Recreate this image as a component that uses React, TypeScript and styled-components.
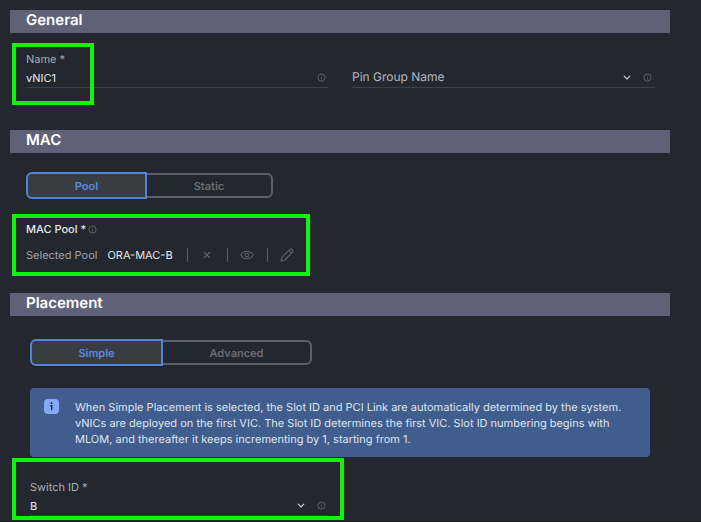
import React, { useState } from "react";
import styled, { createGlobalStyle } from "styled-components";

const GlobalStyle = createGlobalStyle`
  *, *::before, *::after { box-sizing: border-box; }
  body {
    margin: 0;
    background: #23272f;
    color: #e6e8eb;
    font-family: Inter, "Liberation Sans", sans-serif;
    font-size: 11px;
    line-height: 16px;
    text-rendering: geometricPrecision;
  }
  button, input, select { font: inherit; color: inherit; text-rendering: inherit; }
`;

const Page = styled.main`
  min-height: 100vh;
  padding: 10px 31px 0 10px;
  border-bottom: 1px solid #16191e;
`;

const SectionTitle = styled.h2`
  margin: 0;
  height: 23px;
  padding: 0 16px;
  background: #5f6277;
  color: #fff;
  font-size: 15px;
  font-weight: 600;
  line-height: 20px;
`;

const SectionBody = styled.div<{ $space: string; $inset?: number }>`
  padding: ${(p) => p.$space};
  margin: 0 ${(p) => p.$inset ?? 16}px;
`;

const Columns = styled.div`
  display: grid;
  grid-template-columns: 1fr 1fr;
  gap: 24px;
  align-items: end;
`;

const Field = styled.div`
  position: relative;
`;

const FieldLabel = styled.label`
  display: block;
  color: #a9adb5;
`;

const Control = styled.div<{ $large?: boolean }>`
  display: flex;
  align-items: center;
  height: 21px;
  gap: 12px;
  padding-right: 2px;
  border-bottom: 1px solid #3c4048;
  font-size: ${(p) => (p.$large ? 12 : 11)}px;
  svg { flex: none; }
`;

const TextInput = styled.input`
  flex: 1;
  min-width: 0;
  padding: 2px 0 0;
  border: 0;
  outline: 0;
  background: transparent;
`;

const Select = styled.select<{ $muted?: boolean }>`
  flex: 1;
  min-width: 0;
  padding: ${(p) => (p.$muted ? 0 : 2)}px 0 0;
  border: 0;
  outline: 0;
  appearance: none;
  background: transparent;
  color: ${(p) => (p.$muted ? "#b4b8c0" : "#e6e8eb")};
`;

const Segments = styled.div`
  display: flex;
`;

const Segment = styled.button<{ $active: boolean; $width: number }>`
  width: ${(p) => p.$width}px;
  height: ${(p) => (p.$active ? 27 : 25)}px;
  align-self: center;
  padding: 0;
  font-weight: 600;
  cursor: pointer;
  color: ${(p) => (p.$active ? "#5c8ae0" : "#6a6d73")};
  background: ${(p) => (p.$active ? "#383c43" : "transparent")};
  border: 2px solid ${(p) => (p.$active ? "#5583d6" : "#5d6068")};
  &:first-child { border-radius: 6px 0 0 6px; }
  &:last-child { border-radius: 0 6px 6px 0; }
  &:not(:first-child) { border-left-width: ${(p) => (p.$active ? 2 : 0)}px; }
  &:not(:last-child) { border-right-width: ${(p) => (p.$active ? 2 : 0)}px; }
`;

const Group = styled.div`
  position: relative;
  width: fit-content;
  margin-top: 22px;
`;

const GroupTitle = styled.div`
  display: flex;
  align-items: center;
  gap: 2px;
  font-weight: 500;
`;

const PoolRow = styled.div`
  display: flex;
  align-items: center;
  margin-top: 10px;
`;

const Muted = styled.span`
  color: #a0a4ac;
  margin-right: 10px;
`;

const PoolName = styled.span`
  margin-right: 14px;
`;

const IconButton = styled.button`
  display: grid;
  place-items: center;
  width: 40px;
  height: 14px;
  padding: 0;
  border: 0;
  border-left: 1px solid #5c6068;
  background: transparent;
  color: #5c6068;
  cursor: pointer;
`;

const Banner = styled.div`
  display: flex;
  align-items: flex-start;
  gap: 16px;
  margin-top: 22px;
  padding: 11px 14px 10px;
  border-radius: 4px;
  background: #405d8e;
  color: #dfe5f0;
  svg { flex: none; }
`;

const BannerText = styled.p`
  margin: 0;
`;

const SwitchField = styled(Field)`
  width: 48%;
  margin-top: 22px;
`;

const Highlight = styled.div<{ $inset: string; $width?: number }>`
  position: absolute;
  inset: ${(p) => p.$inset};
  width: ${(p) => (p.$width ? p.$width + "px" : "auto")};
  border: 4px solid #0cf50c;
  pointer-events: none;
`;

const InfoIcon = () => (
  <svg width="9" height="9" viewBox="0 0 9 9" fill="none" stroke="#666a72" aria-hidden="true">
    <circle cx="4.5" cy="4.5" r="3.6" strokeWidth="0.9" />
    <path d="M4.5 4.2v2.3M4.5 2.6v.8" strokeWidth="0.8" />
  </svg>
);

const Chevron = () => (
  <svg width="8" height="8" viewBox="0 0 8 8" fill="none" stroke="#c3c6cc" aria-hidden="true">
    <path d="M1.2 3.1 4 6l2.8-2.9" strokeWidth="1.2" strokeLinecap="round" strokeLinejoin="round" />
  </svg>
);

const CrossIcon = () => (
  <svg width="8" height="8" viewBox="0 0 8 8" fill="none" stroke="currentColor" aria-hidden="true">
    <path d="m1 1 6 6M7 1 1 7" strokeWidth="1.2" />
  </svg>
);

const EyeIcon = () => (
  <svg width="14" height="10" viewBox="0 0 14 10" fill="none" stroke="currentColor" aria-hidden="true">
    <path d="M.8 5C2.2 2.5 4.4 1.2 7 1.2S11.8 2.5 13.2 5C11.8 7.5 9.6 8.8 7 8.8S2.2 7.5.8 5Z" strokeWidth="1.1" strokeLinejoin="round" />
    <circle cx="7" cy="5" r="1.9" strokeWidth="1.1" />
  </svg>
);

const PencilIcon = () => (
  <svg width="14" height="14" viewBox="0 0 14 14" fill="none" stroke="currentColor" strokeWidth="1.1" strokeLinejoin="round" aria-hidden="true">
    <path d="m1 13 1-3.8 8.1-8.1Q11.2.4 12.4 1.6 13.6 2.8 12.9 3.9L4.8 12 1 13Z" />
    <path d="m9 2.3 2.7 2.7" />
  </svg>
);

const BannerIcon = () => (
  <svg width="15" height="15" viewBox="0 0 15 15" aria-hidden="true">
    <rect width="15" height="15" rx="4" fill="#86a9f5" />
    <circle cx="7.5" cy="4.3" r="1" fill="#1f2a44" />
    <path d="M6.3 6.7h1.4V11.3" fill="none" stroke="#1f2a44" strokeWidth="1.4" />
  </svg>
);

type ToggleProps = { label: string; options: string[]; widths: number[] };

function Toggle({ label, options, widths }: ToggleProps) {
  const [selected, setSelected] = useState(0);
  return (
    <Segments role="group" aria-label={label}>
      {options.map((option, i) => (
        <Segment
          key={option}
          type="button"
          $width={widths[i]}
          $active={i === selected}
          aria-pressed={i === selected}
          onClick={() => setSelected(i)}
        >
          {option}
        </Segment>
      ))}
    </Segments>
  );
}

export default function App() {
  return (
    <Page>
      <GlobalStyle />
      <section>
        <SectionTitle>General</SectionTitle>
        <SectionBody $space="18px 0 42px">
          <Columns>
            <Field>
              <FieldLabel htmlFor="name">Name *</FieldLabel>
              <Control>
                <TextInput id="name" defaultValue="vNIC1" />
                <InfoIcon />
              </Control>
              <Highlight $inset="-8px auto -17px -14px" $width={82} />
            </Field>
            <Field>
              <Control $large>
                <Select $muted aria-label="Pin Group Name">
                  <option>Pin Group Name</option>
                </Select>
                <Chevron />
                <InfoIcon />
              </Control>
            </Field>
          </Columns>
        </SectionBody>
      </section>
      <section>
        <SectionTitle>MAC</SectionTitle>
        <SectionBody $space="19px 0 30px">
          <Toggle label="MAC address type" options={["Pool", "Static"]} widths={[121, 126]} />
          <Group>
            <GroupTitle>
              MAC Pool *
              <InfoIcon />
            </GroupTitle>
            <PoolRow>
              <Muted>Selected Pool</Muted>
              <PoolName>ORA-MAC-B</PoolName>
              <IconButton type="button" aria-label="Clear pool"><CrossIcon /></IconButton>
              <IconButton type="button" aria-label="View pool"><EyeIcon /></IconButton>
              <IconButton type="button" aria-label="Edit pool"><PencilIcon /></IconButton>
            </PoolRow>
            <Highlight $inset="-7px auto -13px -14px" $width={298} />
          </Group>
        </SectionBody>
      </section>
      <section>
        <SectionTitle>Placement</SectionTitle>
        <SectionBody $space="23px 0 0" $inset={20}>
          <Toggle label="Placement mode" options={["Simple", "Advanced"]} widths={[133, 149]} />
          <Banner role="note">
            <BannerIcon />
            <BannerText>
              When Simple Placement is selected, the Slot ID and PCI Link are automatically determined by the system.
              vNICs are deployed on the first VIC. The Slot ID determines the first VIC. Slot ID numbering begins with
              MLOM, and thereafter it keeps incrementing by 1, starting from 1.
            </BannerText>
          </Banner>
          <SwitchField>
            <FieldLabel htmlFor="switch-id">Switch ID *</FieldLabel>
            <Control>
              <Select id="switch-id" defaultValue="B">
                <option>A</option>
                <option>B</option>
              </Select>
              <Chevron />
              <InfoIcon />
            </Control>
            <Highlight $inset="-21px -16px -4px -18px" />
          </SwitchField>
        </SectionBody>
      </section>
    </Page>
  );
}
